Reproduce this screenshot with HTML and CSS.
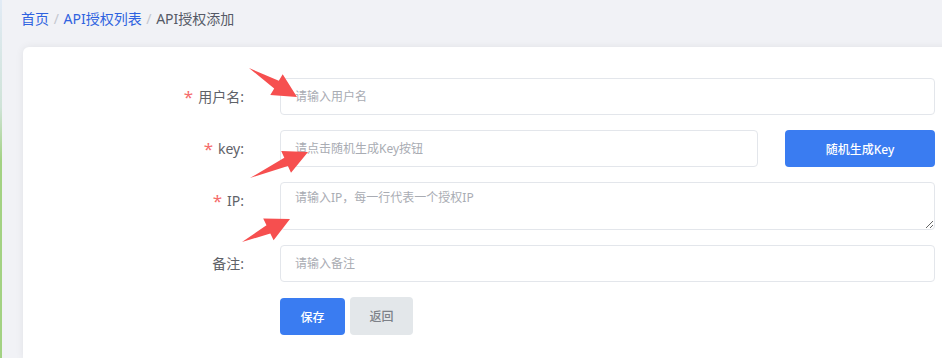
FILE: index.html
```html
<!DOCTYPE html>
<html lang="zh-CN">
<head>
    <meta charset="UTF-8">
    <title>API授权添加</title>
    <link rel="stylesheet" href="styles.css">
</head>
<body>
    <div class="page">
        <!-- 面包屑 -->
        <div class="breadcrumb">
            <a href="#">首页</a>
            <span class="sep">/</span>
            <a href="#">API授权列表</a>
            <span class="sep">/</span>
            <span class="current">API授权添加</span>
        </div>

        <!-- 表单 -->
        <div class="card">
            <form class="form">
                <label class="label"><span class="req">*</span>用户名:</label>
                <input class="input" type="text" placeholder="请输入用户名">

                <label class="label"><span class="req">*</span>key:</label>
                <div class="key-row">
                    <input class="input" type="text" placeholder="请点击随机生成Key按钮">
                    <button type="button" class="btn btn-primary btn-key">随机生成Key</button>
                </div>

                <label class="label"><span class="req">*</span>IP:</label>
                <textarea class="input textarea" placeholder="请输入IP，每一行代表一个授权IP"></textarea>

                <label class="label">备注:</label>
                <input class="input" type="text" placeholder="请输入备注">

                <span></span>
                <div class="actions">
                    <button type="submit" class="btn btn-primary">保存</button>
                    <button type="button" class="btn btn-gray">返回</button>
                </div>
            </form>
        </div>

        <!-- 标注箭头 -->
        <svg class="marks" width="942" height="358" viewBox="0 0 942 358">
            <polygon points="249,68 278.8,80.7 282.7,74.3 297,97 270.3,94.9 274.2,88.5"/>
            <polygon points="250,178 284.3,157.7 281.2,150.9 308,152 291,172.7 287.9,165.9"/>
            <polygon points="242,242 266.5,225.3 263.2,218.6 290,219 273.6,240.2 270.3,233.5"/>
        </svg>
    </div>
</body>
</html>
```

FILE: styles.css
```css
* {
    margin: 0;
    padding: 0;
    box-sizing: border-box;
    font-family: "Noto Sans", "Noto Sans CJK SC", sans-serif;
}

body {
    background: #f1f2f6;
    overflow: hidden;
}

.page {
    position: relative;
    height: 358px;
    padding-left: 21px;
    border-left: 2px solid;
    border-image: linear-gradient(#e2ebf6, #cfe3d8 30%, #a3d283 45%, #a3d283) 1;
}

/* 面包屑 */
.breadcrumb {
    height: 47px;
    padding-top: 8px;
    margin-left: -2px;
    font-size: 14px;
    color: #555a66;
}

.breadcrumb a {
    color: #2f63e0;
    text-decoration: none;
}

.breadcrumb .sep {
    color: #c4c7cf;
    margin: 0 1px;
}

/* 卡片 */
.card {
    background: #fff;
    border-radius: 6px 0 0 0;
    box-shadow: 0 0 8px rgba(0, 0, 0, 0.07);
    margin-right: -10px;
    height: 311px;
    padding-top: 31px;
}

.form {
    display: grid;
    grid-template-columns: 257px 655px;
    row-gap: 15px;
}

.label {
    font-size: 14px;
    color: #5f6268;
    text-align: right;
    padding-right: 36px;
    line-height: 37px;
}

.req {
    color: #f56c6c;
    font-size: 17px;
    margin-right: 5px;
    vertical-align: -1px;
}

.input {
    height: 37px;
    border: 1px solid #e3e6eb;
    border-radius: 4px;
    padding: 0 14px;
    font-size: 12px;
    color: #333;
    background: #fff;
    outline: none;
}

.input::placeholder {
    color: #a9acb3;
}

.textarea {
    height: 48px;
    padding-top: 6px;
    resize: vertical;
    line-height: 18px;
}

.key-row {
    display: flex;
    gap: 27px;
}

.key-row .input {
    flex: 1;
}

.btn {
    height: 37px;
    border: none;
    border-radius: 4px;
    font-size: 12px;
    font-weight: 500;
    cursor: pointer;
}

.btn-primary {
    background: #3a7cf1;
    color: #fff;
}

.btn-key {
    width: 150px;
}

.btn-gray {
    background: #e3e7ea;
    color: #7d8188;
    width: 63px;
    margin-top: -1px;
    height: 38px;
}

.actions {
    display: flex;
    gap: 5px;
    margin-top: 1px;
}

.actions .btn-primary {
    width: 65px;
}

/* 标注箭头 */
.marks {
    position: absolute;
    left: -2px;
    top: 0;
    pointer-events: none;
    fill: #f64f4f;
}
```
